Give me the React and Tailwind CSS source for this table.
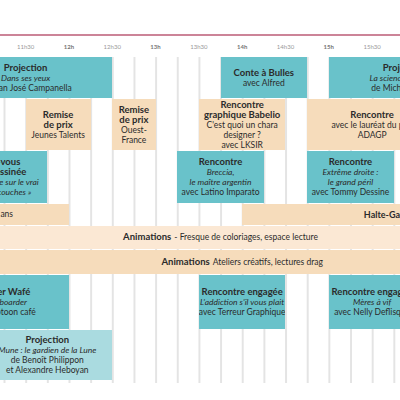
import React from 'react';

// quarter-hour grid, first column = 10h00, sits 104px left of the viewport
const times = [
  { label: '11h30', col: 'col-start-6', bold: false },
  { label: '12h', col: 'col-start-8', bold: true },
  { label: '12h30', col: 'col-start-10', bold: false },
  { label: '13h', col: 'col-start-12', bold: true },
  { label: '13h30', col: 'col-start-14', bold: false },
  { label: '14h', col: 'col-start-16', bold: true },
  { label: '14h30', col: 'col-start-18', bold: false },
  { label: '15h', col: 'col-start-20', bold: true },
  { label: '15h30', col: 'col-start-22', bold: false },
];

const teal = 'bg-[#69c2ca]';
const beige = 'bg-[#f6dcbb]';

const Block = ({ className, title, lines = [], italic = [] }) => {
  return (
    <div
      className={
        'flex flex-col items-center justify-center text-center text-[8.5px] text-[#2b2b2b] whitespace-nowrap overflow-hidden ' +
        className
      }
    >
      {title.map((t) => (
        <p key={t} className="font-bold text-[9.5px] leading-[10px]">
          {t}
        </p>
      ))}
      {italic.map((t) => (
        <p key={t} className="italic leading-[10px]">
          {t}
        </p>
      ))}
      {lines.map((t) => (
        <p key={t} className="leading-[10px]">
          {t}
        </p>
      ))}
    </div>
  );
};

const App = () => {
  return (
    <div className="w-[400px] h-[400px] overflow-hidden bg-white font-['Lato',sans-serif]">
      <div className="pt-[34px]">
        <div className="h-[2px] bg-[#cc8498]"></div>
      </div>
      <div className="ml-[-104.333px] grid grid-cols-[repeat(32,21.667px)] h-[21px] items-center">
        {times.map((t) => (
          <span
            key={t.label}
            className={
              t.col +
              ' col-span-2 row-start-1 text-center text-[6px] ' +
              (t.bold ? 'font-bold text-[#777]' : 'text-[#999]')
            }
          >
            {t.label}
          </span>
        ))}
      </div>
      <div className="ml-[-104.333px] grid grid-cols-[repeat(32,21.667px)] grid-rows-[41px_51px_52px_21px_23px_24px_54px_50px] gap-y-px pb-[3px] bg-[linear-gradient(90deg,#e4e4e4_0,#e4e4e4_1.5px,transparent_1.5px)] bg-size-[21.667px_100%] bg-position-[-0.75px_0]">
        <Block
          className={'row-start-1 col-start-3 col-span-8 ' + teal}
          title={['Projection']}
          italic={['Dans ses yeux']}
          lines={['de Juan José Campanella']}
        />
        <Block
          className={'row-start-1 col-start-16 col-span-4 ' + teal}
          title={['Conte à Bulles']}
          lines={['avec Alfred']}
        />
        <Block
          className={'row-start-1 col-start-21 col-span-7 ' + teal}
          title={['Projection']}
          italic={['La science des rêves']}
          lines={['de Michel Gondry']}
        />

        <Block
          className={'row-start-2 col-start-7 col-span-3 ' + beige}
          title={['Remise', 'de prix']}
          lines={['Jeunes Talents']}
        />
        <Block
          className={'row-start-2 col-start-11 col-span-2 ' + beige}
          title={['Remise', 'de prix']}
          lines={['Ouest-', 'France']}
        />
        <Block
          className={'row-start-2 col-start-15 col-span-4 ' + beige}
          title={['Rencontre', 'graphique Babelio']}
          lines={["C'est quoi un chara", 'designer ?', 'avec LKSIR']}
        />
        <Block
          className={'row-start-2 col-start-20 col-span-6 ' + beige}
          title={['Rencontre']}
          lines={['avec le lauréat du prix', 'ADAGP']}
        />

        <Block
          className={'row-start-3 col-start-3 col-span-5 ' + teal}
          title={['Rendez-vous', 'presse dessinée']}
          italic={['« Notre enquête sur le vrai', 'pouvoir des couches »']}
        />
        <Block
          className={'row-start-3 col-start-14 col-span-4 ' + teal}
          title={['Rencontre']}
          italic={['Breccia,', 'le maître argentin']}
          lines={['avec Latino Imparato']}
        />
        <Block
          className={'row-start-3 col-start-20 col-span-4 ' + teal}
          title={['Rencontre']}
          italic={['Extrême droite :', 'le grand péril']}
          lines={['avec Tommy Dessine']}
        />

        <div className={'row-start-4 col-start-1 col-span-8 flex items-center justify-center text-[8.5px] text-[#2b2b2b] whitespace-nowrap ' + beige}>
          Lectures 0-5 ans
        </div>
        <div className={'row-start-4 col-start-17 col-span-14 flex items-center justify-center text-[9px] font-bold text-[#2b2b2b] whitespace-nowrap ' + beige}>
          Halte-Garderie
        </div>

        <div className="row-start-5 col-start-1 col-span-30 flex items-center justify-center text-[8.5px] text-[#2b2b2b] whitespace-nowrap bg-[#fbe8d4]">
          <span className="font-bold text-[9.5px] mr-[3px]">Animations</span>- Fresque de coloriages, espace lecture
        </div>
        <div className={'row-start-6 col-start-1 col-span-32 flex items-center justify-center text-[8.5px] text-[#2b2b2b] whitespace-nowrap ' + beige}>
          <span className="font-bold text-[9.5px] mr-[3px]">Animations</span>Ateliers créatifs, lectures drag
        </div>

        <Block
          className={'row-start-7 col-start-3 col-span-6 ' + teal}
          title={['Atelier Wafé']}
          italic={['Storyboarder']}
          lines={['au Webtoon café']}
        />
        <Block
          className={'row-start-7 col-start-15 col-span-4 ' + teal}
          title={['Rencontre engagée']}
          italic={["L'addiction s'il vous plait"]}
          lines={['avec Terreur Graphique']}
        />
        <Block
          className={'row-start-7 col-start-21 col-span-4 ' + teal}
          title={['Rencontre engagée']}
          italic={['Mères à vif']}
          lines={['avec Nelly Deflisque']}
        />

        <Block
          className="row-start-8 col-start-5 col-span-6 bg-[#aadbe0]"
          title={['Projection']}
          italic={['Mune : le gardien de la Lune']}
          lines={['de Benoît Philippon', 'et Alexandre Heboyan']}
        />
      </div>
    </div>
  );
};

export default App;
